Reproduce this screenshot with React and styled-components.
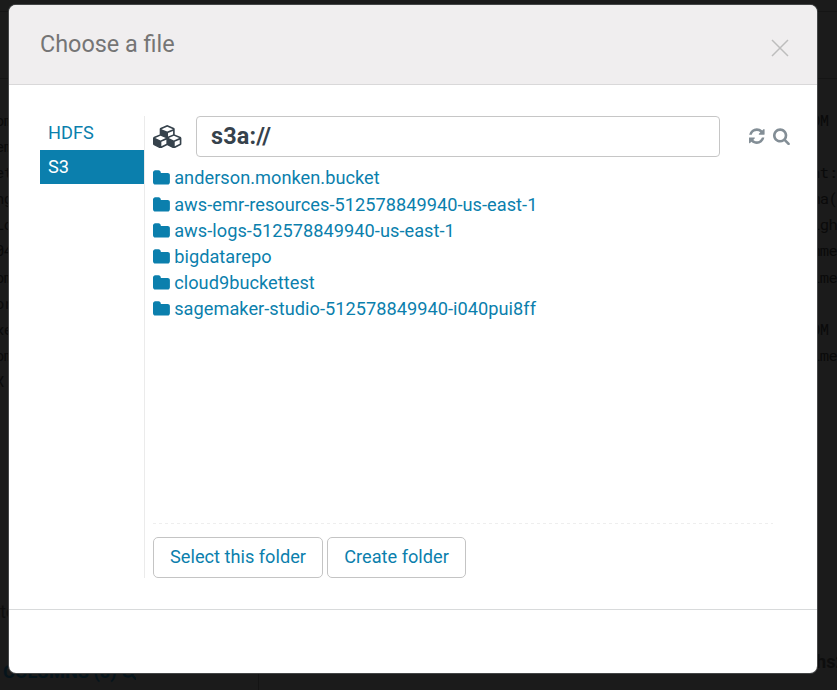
import React from 'react';
import styled, { createGlobalStyle } from 'styled-components';

const GlobalStyle = createGlobalStyle`
  * { box-sizing: border-box; }
  html, body { margin: 0; height: 100%; overflow: hidden; }
  body { background: #1b1b1b; font-family: Roboto, "Liberation Sans", sans-serif; }
`;

const blue = '#0b7fad';

const Page = styled.div`
  position: relative;
  display: flex;
  width: 837px;
  height: 690px;
  padding: 5px 20px 17px 9px;
  overflow: hidden;
  background: #1b1b1b;
`;

const Rule = styled.div`
  position: absolute;
  left: 0;
  right: 0;
  top: ${(p) => p.$top}px;
  height: 1px;
  background: #151515;
`;

const Divider = styled.div`
  position: absolute;
  left: 258px;
  top: 674px;
  width: 1px;
  height: 16px;
  background: #141414;
`;

const Code = styled.pre`
  position: absolute;
  top: 107px;
  left: ${(p) => (p.$side === 'left' ? -5 : 811)}px;
  margin: 0;
  font: 15.5px/26.1px "Roboto Mono", "DejaVu Sans Mono", monospace;
  letter-spacing: -0.6px;
  color: #0a0a0a;
`;

const Behind = styled.div`
  position: absolute;
  display: flex;
  align-items: center;
  gap: 5px;
  left: ${(p) => p.$left}px;
  top: ${(p) => p.$top}px;
  font-size: 18.2px;
  line-height: 22px;
  font-weight: ${(p) => (p.$bold ? 700 : 400)};
  color: ${(p) => p.$color || '#0e0e0e'};
  white-space: nowrap;
`;

const Dialog = styled.section`
  position: relative;
  display: flex;
  flex-direction: column;
  width: 808px;
  height: 668px;
  border-radius: 7px;
  overflow: hidden;
  background: #fff;
  box-shadow: 0 0 0 1px #444647;
`;

const Header = styled.header`
  display: flex;
  align-items: center;
  justify-content: space-between;
  flex: none;
  height: 80px;
  padding: 0 28px 0 31px;
  border-bottom: 1px solid #d9d8d9;
  background: #f0eeef;
`;

const Title = styled.h2`
  margin: 0 0 2px;
  font-size: 23.4px;
  line-height: 28px;
  font-weight: 400;
  color: #757575;
`;

const CloseButton = styled.button`
  display: flex;
  margin: 7px 0 0;
  padding: 0;
  border: 0;
  background: none;
  color: #bdbdbd;
`;

const Body = styled.div`
  display: flex;
  flex: none;
  height: 524px;
  padding: 31px 27px 31px 31px;
`;

const Sources = styled.nav`
  width: 104px;
`;

const Source = styled.a`
  display: block;
  height: 34px;
  padding-left: 8px;
  font-size: 18.2px;
  line-height: 34px;
  color: ${(p) => (p.$active ? '#fff' : blue)};
  background: ${(p) => (p.$active ? blue : 'transparent')};
`;

const Browser = styled.div`
  display: flex;
  flex-direction: column;
  flex: 1;
  border-left: 1px solid #ebebeb;
  padding-left: 8px;
`;

const PathBar = styled.div`
  display: flex;
  align-items: center;
  height: 41px;
  color: #36424c;
`;

const PathInput = styled.input`
  width: 524px;
  height: 41px;
  margin-left: 13px;
  padding: 0 14px 1px;
  border: 1px solid #c6c6c6;
  border-radius: 4px;
  outline: 0;
  font: 700 23.4px Roboto, sans-serif;
  letter-spacing: 0.15px;
  color: #36424c;
`;

const Tools = styled.div`
  display: flex;
  gap: 8px;
  margin-left: 29.4px;
  margin-top: -1px;
  color: #838e96;
`;

const Files = styled.ul`
  flex: 1;
  margin: 0;
  padding: 8.4px 0 0;
  list-style: none;
`;

const File = styled.li`
  display: flex;
  align-items: center;
  gap: 3px;
  height: 26.15px;
  font-size: 18.2px;
  line-height: 26px;
  letter-spacing: 0.03px;
  color: ${blue};
  white-space: nowrap;
`;

const Dashes = styled.svg`
  display: block;
  width: 620px;
  height: 1px;
`;

const Actions = styled.div`
  display: flex;
  gap: 4px;
  margin-top: 13px;
`;

const Button = styled.button`
  width: ${(p) => p.$width}px;
  height: 41px;
  padding: 0 0 2px;
  border: 1px solid #c4c4c4;
  border-radius: 5px;
  background: #fff;
  font: 18.2px Roboto, sans-serif;
  color: ${blue};
`;

const Footer = styled.footer`
  flex: 1;
  border-top: 1px solid #d8dadb;
`;

const IconSvg = styled.svg`
  display: block;
  flex: none;
  fill: currentColor;
`;

const glyphs = {
  cubes: 'M640 1632l384-192v-314l-384 164v342zm-64-454l404-173-404-173-404 173zm1088 454l384-192v-314l-384 164v342zm-64-454l404-173-404-173-404 173zm-448-293l384-165v-266l-384 164v267zm-64-379l441-189-441-189-441 189zm1088 518v416q0 36-19 67t-52 47l-448 224q-25 14-57 14t-57-14l-448-224q-4-2-7-4-2 2-7 4l-448 224q-25 14-57 14t-57-14l-448-224q-33-16-52-47t-19-67v-416q0-38 21.5-70t56.5-48l434-186v-400q0-38 21.5-70t56.5-48l448-192q23-10 50-10t50 10l448 192q35 16 56.5 48t21.5 70v400l434 186q36 16 57 48t21 70z',
  folder: 'M1664 608v704q0 92-66 158t-158 66h-1216q-92 0-158-66t-66-158v-960q0-92 66-158t158-66h320q92 0 158 66t66 158v32h672q92 0 158 66t66 158z',
  refresh: 'M1511 1056q0 5-1 7-64 268-268 434.5t-478 166.500q-146 0-282.5-55t-243.5-157l-129 129q-19 19-45 19t-45-19-19-45v-448q0-26 19-45t45-19h448q26 0 45 19t19 45-19 45l-137 137q71 66 161 102t187 36q134 0 250-65t186-179q11-17 53-117 8-23 30-23h192q13 0 22.500 9.500t9.500 22.500zm25-800v448q0 26-19 45t-45 19h-448q-26 0-45-19t-19-45 19-45l138-138q-148-137-349-137-134 0-250 65t-186 179q-11 17-53 117-8 23-30 23h-199q-13 0-22.500-9.500t-9.500-22.500v-7q65-268 270-434.500t480-166.500q146 0 284 55.500t245 156.500l130-129q19-19 45-19t45 19 19 45z',
  search: 'M1152 832q0-185-131.500-316.500t-316.500-131.500-316.500 131.500-131.500 316.500 131.500 316.500 316.500 131.500 316.500-131.500 131.500-316.500zm512 832q0 52-38 90t-90 38q-54 0-90-38l-343-342q-179 124-399 124-143 0-273.500-55.500t-225-150-150-225-55.500-273.500 55.500-273.500 150-225 225-150 273.500-55.500 273.500 55.500 225 150 150 225 55.500 273.500q0 220-124 399l343 343q37 37 37 90z',
};

function Glyph({ name, units, size }) {
  return (
    <IconSvg width={(units * size) / 1792} height={size} viewBox={`0 0 ${units} 1792`} aria-hidden="true">
      <path d={glyphs[name]} />
    </IconSvg>
  );
}

const folders = [
  'anderson.monken.bucket',
  'aws-emr-resources-512578849940-us-east-1',
  'aws-logs-512578849940-us-east-1',
  'bigdatarepo',
  'cloud9buckettest',
  'sagemaker-studio-512578849940-i040pui8ff',
];

const leftCode = ['om', 'em', 'et', 'ng', 'Lo', '04', 'om', 'or', 'xe', 'om', 'X'].join('\n');
const rightCode = ['OM', '', 'nt:', 'ma(', 'igh', 'mme', 'ime', '', 'OM', 'ime'].join('\n');

export default function App() {
  return (
    <>
      <GlobalStyle />
      <Page>
        <Rule $top={11} />
        <Rule $top={78} />
        <Code $side="left">{leftCode}</Code>
        <Code $side="right">{rightCode}</Code>
        <Behind $left={0} $top={601}>to</Behind>
        <Behind $left={3} $top={661} $bold $color="#06141b">
          COLUMNS (8) <Glyph name="search" units={1664} size={16} />
        </Behind>
        <Behind $left={816} $top={651} $bold>hs2</Behind>
        <Divider />
        <Dialog role="dialog">
          <Header>
            <Title>Choose a file</Title>
            <CloseButton aria-label="Close">
              <svg width="18" height="18" viewBox="0 0 18 18" fill="none" stroke="currentColor" strokeWidth="1.5">
                <path d="M1 1L17 17M17 1L1 17" />
              </svg>
            </CloseButton>
          </Header>
          <Body>
            <Sources>
              <Source>HDFS</Source>
              <Source $active>S3</Source>
            </Sources>
            <Browser>
              <PathBar>
                <Glyph name="cubes" units={2304} size={23.4} />
                <PathInput defaultValue="s3a://" spellCheck={false} />
                <Tools>
                  <Glyph name="refresh" units={1536} size={18.2} />
                  <Glyph name="search" units={1664} size={18.2} />
                </Tools>
              </PathBar>
              <Files>
                {folders.map((name) => (
                  <File key={name}>
                    <Glyph name="folder" units={1792} size={18.2} />
                    {name}
                  </File>
                ))}
              </Files>
              <Dashes viewBox="0 0 620 1">
                <path d="M0 .5H620" stroke="#eeeeee" strokeDasharray="3 3" />
              </Dashes>
              <Actions>
                <Button $width={170}>Select this folder</Button>
                <Button $width={139}>Create folder</Button>
              </Actions>
            </Browser>
          </Body>
          <Footer />
        </Dialog>
      </Page>
    </>
  );
}
